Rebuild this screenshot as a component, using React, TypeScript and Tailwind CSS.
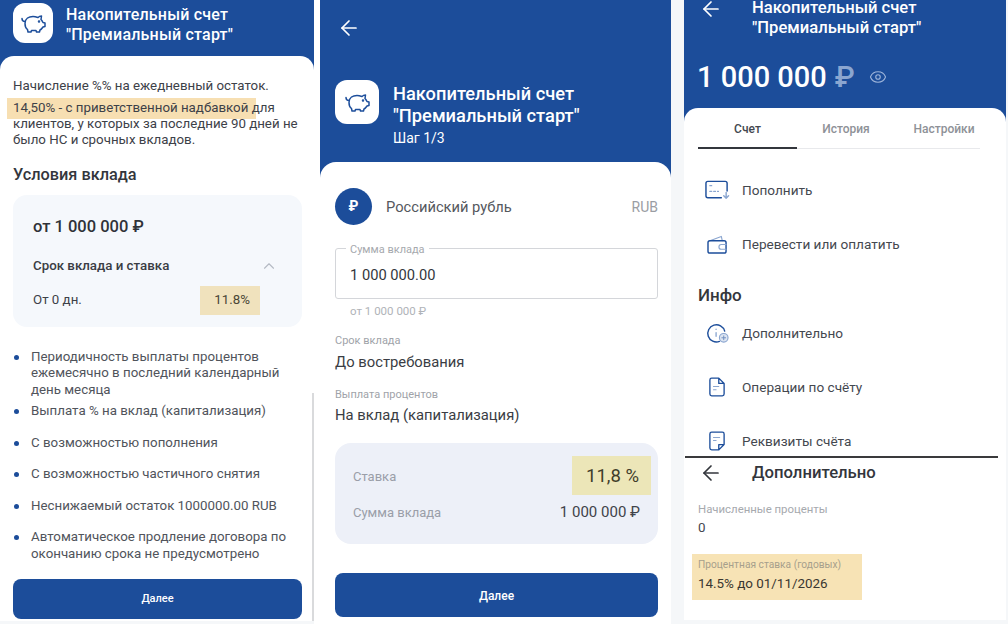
import { ArrowLeft, ChevronUp, Eye } from 'lucide-react';

const font = 'font-["Roboto",sans-serif]';

function Pig({ className }: { className: string }) {
    return (
        <svg viewBox="0 0 25 19" fill="none" stroke="#1d4e9b" strokeWidth="1.500" strokeLinejoin="round" strokeLinecap="round" className={className}>
            <path d="M4 9.500C4 4.500 8 2.500 12 2.500c2 0 3.500.5 5 1 1-1 2.500-1.500 3.500-1.500L20 5.500c1 1 1.500 2 2 3l2 .5v3.500l-2 .5c-1 1.500-2 2.500-3 3l-.5 2h-3l-.5-1.500h-4.500l-.5 1.500H7l-.5-2.500C5 14.500 4 12.500 4 9.500Z" />
            <path d="M4 7.500C2.500 7.500 1 6.500 1 4.500" />
            <circle cx="18" cy="7.500" r=".5" fill="#1d4e9b" />
        </svg>
    );
}

function AppIcon({ size }: { size: string }) {
    return (
        <div className={`${size} shrink-0 rounded-xl bg-white flex items-center justify-center`}>
            <Pig className="w-[25px] h-[19px]" />
        </div>
    );
}

function Bullet({ children }: { children: React.ReactNode }) {
    return (
        <div className="flex gap-[12px]">
            <span className="w-[5px] h-[5px] mt-[6px] rounded-full bg-[#1c4d9a] shrink-0" />
            <span>{children}</span>
        </div>
    );
}

function FirstPhone() {
    const bullets = [
        'Выплата % на вклад (капитализация)',
        'С возможностью пополнения',
        'С возможностью частичного снятия',
        'Неснижаемый остаток 1000000.00 RUB',
    ];
    return (
        <div className="relative w-[314px] shrink-0 h-[621px] bg-[#1c4d9a] overflow-hidden flex flex-col">
            <div className="h-[56px] shrink-0 flex items-start pl-[13px] pt-[3px] gap-[13px]">
                <AppIcon size="w-[40px] h-[40px]" />
                <div className="text-white text-[16px] leading-[20px] font-medium tracking-[0.2px] pt-[2px]">
                    <div>Накопительный счет</div>
                    <div>"Премиальный старт"</div>
                </div>
            </div>
            <div className="flex-1 bg-white rounded-t-[14px] pt-[22px] flex flex-col">
                <div className="px-[13px] text-[13.300px] leading-[16.500px] text-[#3d4148]">
                    <div>Начисление %% на ежедневный остаток.</div>
                    <div className="mt-[3px] -ml-[6px] pl-[6px] w-[249px] bg-[#f7dfb2] whitespace-nowrap h-[21px] leading-[20px]">14,50% - с приветственной надбавкой для</div>
                    <div className="-mt-[3px] relative">клиентов, у которых за последние 90 дней не</div>
                    <div>было НС и срочных вкладов.</div>
                </div>
                <div className="px-[13px] mt-[16px] text-[16.300px] leading-[20px] font-medium text-[#33363c]">Условия вклада</div>
                <div className="ml-[13px] mr-[12px] mt-[10px] h-[132px] rounded-[14px] bg-[#f5f8fc] pl-[20px] pr-[20px] pt-[21px]">
                    <div className="text-[16.500px] leading-[22px] font-medium text-[#2f3238]">от 1 000 000 ₽</div>
                    <div className="mt-[19px] h-[18px] flex items-center justify-between pr-[4px]">
                        <span className="text-[13.300px] leading-[18px] font-medium text-[#3a3d44]">Срок вклада и ставка</span>
                        <ChevronUp className="w-[18px] h-[18px] text-[#b4bac4]" strokeWidth={1.500} />
                    </div>
                    <div className="mt-[11px] flex items-center justify-between pr-[22px]">
                        <span className="text-[13.300px] text-[#3d4148]">От 0 дн.</span>
                        <span className="w-[60px] h-[29px] bg-[#f0e2bd] flex items-center justify-end pr-[10px] text-[13.300px] text-[#4a4636]">11.8%</span>
                    </div>
                </div>
                <div className="mt-[22px] pl-[14px] pr-[13px] text-[13.300px] leading-[16.500px] text-[#50545b]">
                    <Bullet>Периодичность выплаты процентов<br />ежемесячно в последний календарный<br />день месяца</Bullet>
                    <div className="mt-[5px] flex flex-col gap-[15px]">
                        {bullets.map((b) => <Bullet key={b}>{b}</Bullet>)}
                        <Bullet>Автоматическое продление договора по<br />окончанию срока не предусмотрено</Bullet>
                    </div>
                </div>
                <div className="ml-[13px] mr-[12px] mt-[17px] h-[40px] rounded-[8px] bg-[#1c4d9a] text-white text-[11px] font-medium flex items-center justify-center">Далее</div>
            </div>
            {/* scrollbar */}
            <div className="absolute right-0 top-[393px] w-[2px] h-[228px] bg-[#d9dadc]" />
        </div>
    );
}

function SecondPhone() {
    return (
        <div className="w-[351px] shrink-0 h-[624px] bg-[#1c4d9a] overflow-hidden flex flex-col">
            <div className="h-[162px] shrink-0 pl-[15px] pt-[16px]">
                <ArrowLeft className="w-[24px] h-[24px] ml-[2px] text-white" strokeWidth={1.700} />
                <div className="mt-[40px] flex gap-[14px]">
                    <AppIcon size="w-[44px] h-[44px]" />
                    <div className="text-white mt-[3px]">
                        <div className="text-[18.300px] leading-[22px] font-medium">Накопительный счет</div>
                        <div className="text-[18.300px] leading-[22px] font-medium">"Премиальный старт"</div>
                        <div className="mt-[1px] text-[14px] leading-[21px]">Шаг 1/3</div>
                    </div>
                </div>
            </div>
            <div className="flex-1 bg-white rounded-t-[16px] pl-[15px] pr-[13px] pt-[26px] flex flex-col">
                <div className="flex items-center h-[37px]">
                    <div className="w-[37px] h-[37px] rounded-full bg-[#1c4d9a] text-white text-[14px] font-bold flex items-center justify-center">₽</div>
                    <span className="ml-[14px] pt-[2px] text-[14.700px] text-[#55585e]">Российский рубль</span>
                    <span className="ml-auto pt-[2px] text-[14px] text-[#9a9da3]">RUB</span>
                </div>
                <div className="mt-[23px] relative h-[51px] border border-[#d4d6da] rounded-[3px] pl-[14px] pt-[3px] flex items-center text-[14.700px] text-[#33363c]">
                    1 000 000.00
                    <span className="absolute -top-[5px] left-[10px] px-[4px] bg-white text-[11px] leading-[12px] text-[#a6a9ae]">Сумма вклада</span>
                </div>
                <div className="mt-[5px] pl-[15px] text-[11.500px] leading-[15px] text-[#b0b3b8]">от 1 000 000 ₽</div>
                <div className="mt-[14px] text-[11px] leading-[15px] text-[#a0a3a9]">Срок вклада</div>
                <div className="mt-[5px] text-[14.800px] leading-[19px] text-[#3a3d44]">До востребования</div>
                <div className="mt-[15px] text-[11px] leading-[15px] text-[#a0a3a9]">Выплата процентов</div>
                <div className="mt-[4px] text-[14.800px] leading-[19px] text-[#3a3d44]">На вклад (капитализация)</div>
                <div className="mt-[18px] h-[101px] rounded-[16px] bg-[#edf0f8] pl-[18px] pr-[7px] pt-[13px]">
                    <div className="flex items-center justify-between h-[39px]">
                        <span className="pt-[3px] text-[13px] text-[#9a9ea8]">Ставка</span>
                        <span className="w-[79px] h-[39px] pt-[2px] bg-[#ece6b8] flex items-center justify-end pr-[12px] text-[18.500px] text-[#3f3d2a]">11,8 %</span>
                    </div>
                    <div className="mt-[6px] flex items-center justify-between pr-[11px]">
                        <span className="text-[13px] text-[#9a9ea8]">Сумма вклада</span>
                        <span className="text-[15px] text-[#3f434a]">1 000 000 ₽</span>
                    </div>
                </div>
                <div className="mt-[29px] h-[44px] pt-[2px] rounded-[8px] bg-[#1c4d9a] text-white text-[12px] font-medium flex items-center justify-center">Далее</div>
            </div>
        </div>
    );
}

function MenuRow({ icon, label }: { icon: React.ReactNode; label: string }) {
    return (
        <div className="flex items-center h-[54px]">
            <div className="w-[44px] shrink-0 flex justify-center">{icon}</div>
            <span className="text-[13.600px] text-[#44484f]">{label}</span>
        </div>
    );
}

const stroke = { fill: 'none', stroke: '#1d4e9b', strokeWidth: 1.500, strokeLinecap: 'round', strokeLinejoin: 'round' } as const;

function ThirdPhone() {
    return (
        <div className="w-[322px] shrink-0 h-[620px] bg-[#1c4d9a] overflow-hidden flex flex-col">
            <div className="h-[108px] shrink-0 text-white">
                <div className="flex pl-[15px] gap-[29px] -mt-[2px]">
                    <ArrowLeft className="w-[24px] h-[24px] -mt-[1px]" strokeWidth={1.700} />
                    <div className="text-[16.600px] leading-[20px] font-medium whitespace-nowrap">
                        <div>Накопительный счет</div>
                        <div>"Премиальный старт"</div>
                    </div>
                </div>
                <div className="mt-[21px] pl-[13px] flex items-center">
                    <span className="text-[29px] leading-[36px] font-medium">1 000 000</span>
                    <span className="ml-[8px] text-[29px] leading-[36px] font-medium text-[#8ba6d0]">₽</span>
                    <Eye className="ml-[14px] w-[18px] h-[18px] text-[#9db4da]" strokeWidth={1.500} />
                </div>
            </div>
            <div className="bg-white rounded-t-[14px] pt-[13px] pl-[14px] h-[348px] shrink-0 overflow-hidden">
                <div className="flex border-b border-[#e8e9ec] w-[282px] text-[12px] leading-[16px] font-medium h-[28px]">
                    <div className="w-[99px] shrink-0 text-center text-[#44484f] border-b-2 border-[#33363c] h-[28px]">Счет</div>
                    <div className="w-[98px] shrink-0 text-center text-[#8e9197]">История</div>
                    <div className="w-[98px] shrink-0 text-center text-[#8e9197] whitespace-nowrap">Настройки</div>
                </div>
                <div className="mt-[14px]">
                    <MenuRow label="Пополнить" icon={
                        <svg viewBox="0 0 26 20" className="w-[25px] h-[20px] -ml-[6px]" {...stroke}>
                            <path d="M17 18H3a2 2 0 0 1-2-2V3a2 2 0 0 1 2-2h18a2 2 0 0 1 2 2v8" />
                            <path d="M5 5.500h2" stroke="#8ba6d0" strokeWidth="1.200" />
                            <path d="M5 11.500h9" stroke="#8ba6d0" strokeDasharray="2 2" strokeWidth="1.200" />
                            <path d="M22 12.500v6m-2.500-2.500l2.500 2.500 2.500-2.500" stroke="#8ba6d0" />
                        </svg>
                    } />
                    <MenuRow label="Перевести или оплатить" icon={
                        <svg viewBox="0 0 22 20" className="w-[21px] h-[19px] -ml-[5px]" {...stroke}>
                            <path d="M3 6l12-4.500 1 4.500" stroke="#8ba6d0" strokeWidth="1.200" />
                            <rect x="1" y="6" width="19" height="13" rx="2" />
                            <path d="M20 10h-5a2.500 2.500 0 0 0 0 5h5" stroke="#8ba6d0" strokeWidth="1.200" />
                        </svg>
                    } />
                </div>
                <div className="mt-[13px] text-[17px] leading-[22px] font-medium text-[#33363c]">Инфо</div>
                <div>
                    <MenuRow label="Дополнительно" icon={
                        <svg viewBox="0 0 24 22" className="w-[24px] h-[21px] -ml-[4px]" {...stroke}>
                            <path d="M13.500 19.300A9 9 0 1 1 19 8.500" />
                            <path d="M10 6.500v.2M10 10v4" stroke="#8ba6d0" strokeWidth="1.400" />
                            <circle cx="18" cy="15.500" r="4.500" fill="#dde5f1" stroke="#8ba6d0" strokeWidth="1.200" />
                            <path d="M18 13.500v4m-2-2h4" stroke="#6f8fc0" strokeWidth="1" />
                        </svg>
                    } />
                    <MenuRow label="Операции по счёту" icon={
                        <svg viewBox="0 0 18 22" className="w-[16px] h-[20px] -ml-[7px]" {...stroke}>
                            <path d="M11 1H3a2 2 0 0 0-2 2v16a2 2 0 0 0 2 2h12a2 2 0 0 0 2-2V7zM11 1v6h6" />
                            <path d="M5 10.500h6M5 14h3" stroke="#8ba6d0" strokeWidth="1.200" />
                        </svg>
                    } />
                    <MenuRow label="Реквизиты счёта" icon={
                        <svg viewBox="0 0 18 22" className="w-[16px] h-[20px] -ml-[7px]" {...stroke}>
                            <path d="M17 15V3a2 2 0 0 0-2-2H3a2 2 0 0 0-2 2v16a2 2 0 0 0 2 2h8zM17 15h-6v6" />
                            <path d="M5 7h7M5 10.500h3" stroke="#8ba6d0" strokeWidth="1.200" />
                        </svg>
                    } />
                </div>
            </div>
            <div className="flex-1 bg-white">
                <div className="h-[2px] ml-[1px] mr-[8px] bg-[#3a3a3c]" />
                <div className="pl-[15px] flex gap-[29px] items-center h-[30px]">
                    <ArrowLeft className="w-[24px] h-[24px] text-[#33363c]" strokeWidth={1.700} />
                    <span className="text-[16.700px] font-medium text-[#33363c]">Дополнительно</span>
                </div>
                <div className="pl-[14px] mt-[14px] text-[11.400px] leading-[14px] text-[#a6a9ae]">Начисленные проценты</div>
                <div className="pl-[14px] mt-[3px] text-[13.400px] leading-[18px] text-[#44484f]">0</div>
                <div className="ml-[8px] mt-[17px] w-[170px] h-[46px] bg-[#f7e3b5] pl-[6px] pt-[3px]">
                    <div className="text-[10.200px] leading-[16px] text-[#a69f8c]">Процентная ставка (годовых)</div>
                    <div className="mt-[1px] text-[13.400px] leading-[20px] text-[#3a3730]">14.5% до 01/11/2026</div>
                </div>
            </div>
        </div>
    );
}

export default function App() {
    return (
        <div className={`${font} w-[1008px] h-[624px] overflow-hidden bg-[#f5f7f9] flex`}>
            <FirstPhone />
            <div className="w-[6px] shrink-0 bg-white" />
            <SecondPhone />
            <div className="w-[13px] shrink-0" />
            <ThirdPhone />
        </div>
    );
}
